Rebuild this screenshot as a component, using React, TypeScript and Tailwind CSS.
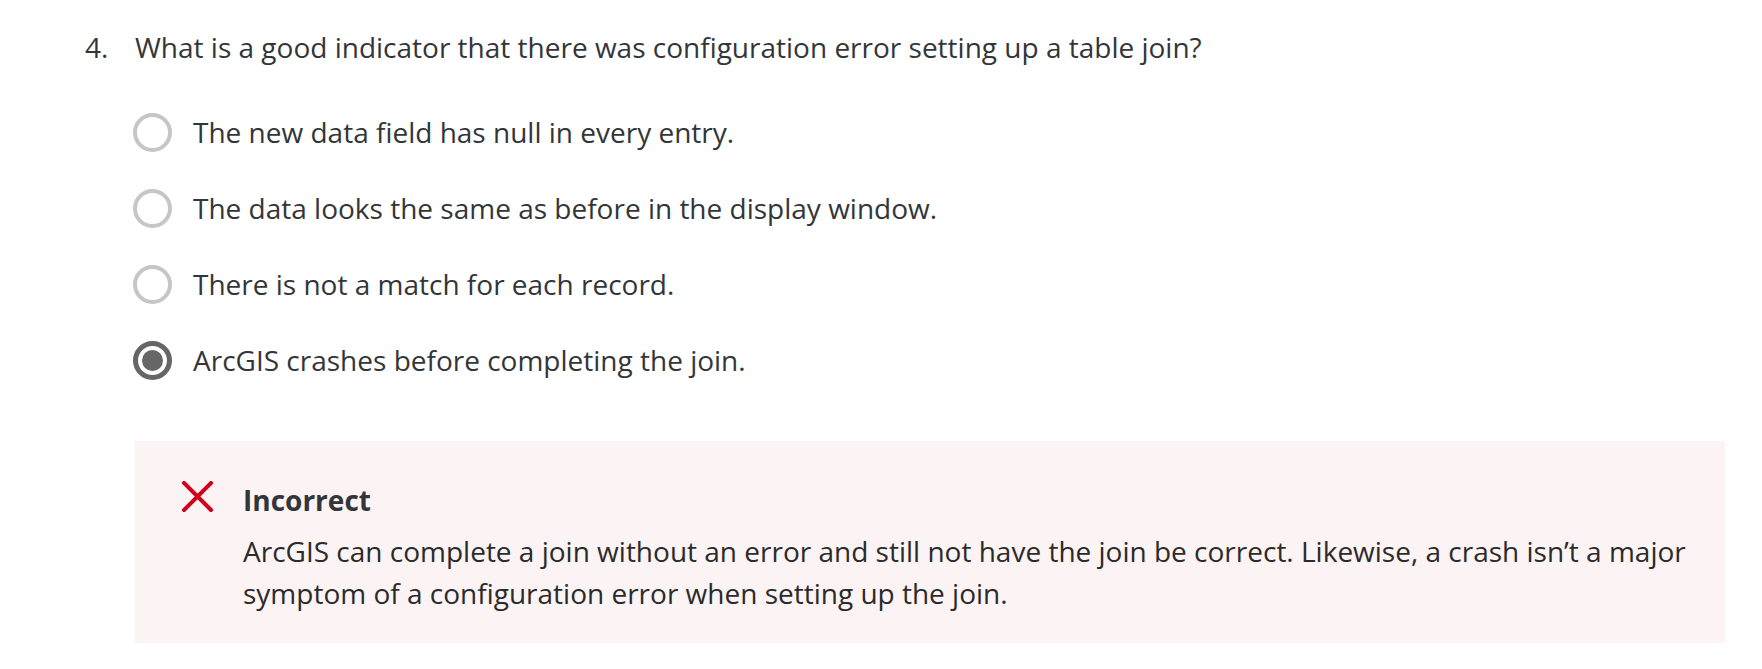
import React from "react";

function Radio({ checked }: { checked?: boolean }) {
  return checked ? (
    <span className="flex h-[39px] w-[39px] shrink-0 items-center justify-center rounded-full border-[5px] border-[#666666]">
      <span className="h-[21px] w-[21px] rounded-full bg-[#666666]" />
    </span>
  ) : (
    <span className="h-[39px] w-[39px] shrink-0 rounded-full border-[4px] border-[#c6c6c6]" />
  );
}

const options = [
  "The new data field has null in every entry.",
  "The data looks the same as before in the display window.",
  "There is not a match for each record.",
  "ArcGIS crashes before completing the join.",
];

export default function App() {
  return (
    <div
      className="h-[669px] w-[1762px] bg-white text-[#333639]"
      style={{ fontFamily: '"Open Sans", sans-serif' }}
    >
      <div className="flex pl-[85px] pt-[27px]">
        <span className="w-[50px] text-[28px] leading-[40px]">4.</span>
        <span className="text-[28px] leading-[40px]">
          What is a good indicator that there was configuration error setting up a table join?
        </span>
      </div>
      <div className="mt-[46px] flex flex-col gap-[37px] pl-[133px]">
        {options.map((o, i) => (
          <div key={i} className="flex items-center gap-[21px]">
            <Radio checked={i === 3} />
            <span className="text-[28px] leading-[39px]">{o}</span>
          </div>
        ))}
      </div>
      <div className="ml-[135px] mt-[61px] h-[202px] w-[1590px] bg-[#fcf3f4] pl-[47px] pt-[41px]">
        <div className="flex gap-[30px]">
          <svg width="31" height="31" viewBox="0 0 31 31" className="-mt-[1px] shrink-0">
            <path d="M2 2 L29 29 M29 2 L2 29" stroke="#d0021b" strokeWidth="4" strokeLinecap="square" />
          </svg>
          <div>
            <div className="text-[28px] font-bold leading-[36px]">Incorrect</div>
            <p className="mt-[12px] text-[28px] leading-[42px] text-[#2b2b2b]">
              ArcGIS can complete a join without an error and still not have the join be correct. Likewise, a crash isn’t a major symptom of a configuration error when setting up the join.
            </p>
          </div>
        </div>
      </div>
    </div>
  );
}
